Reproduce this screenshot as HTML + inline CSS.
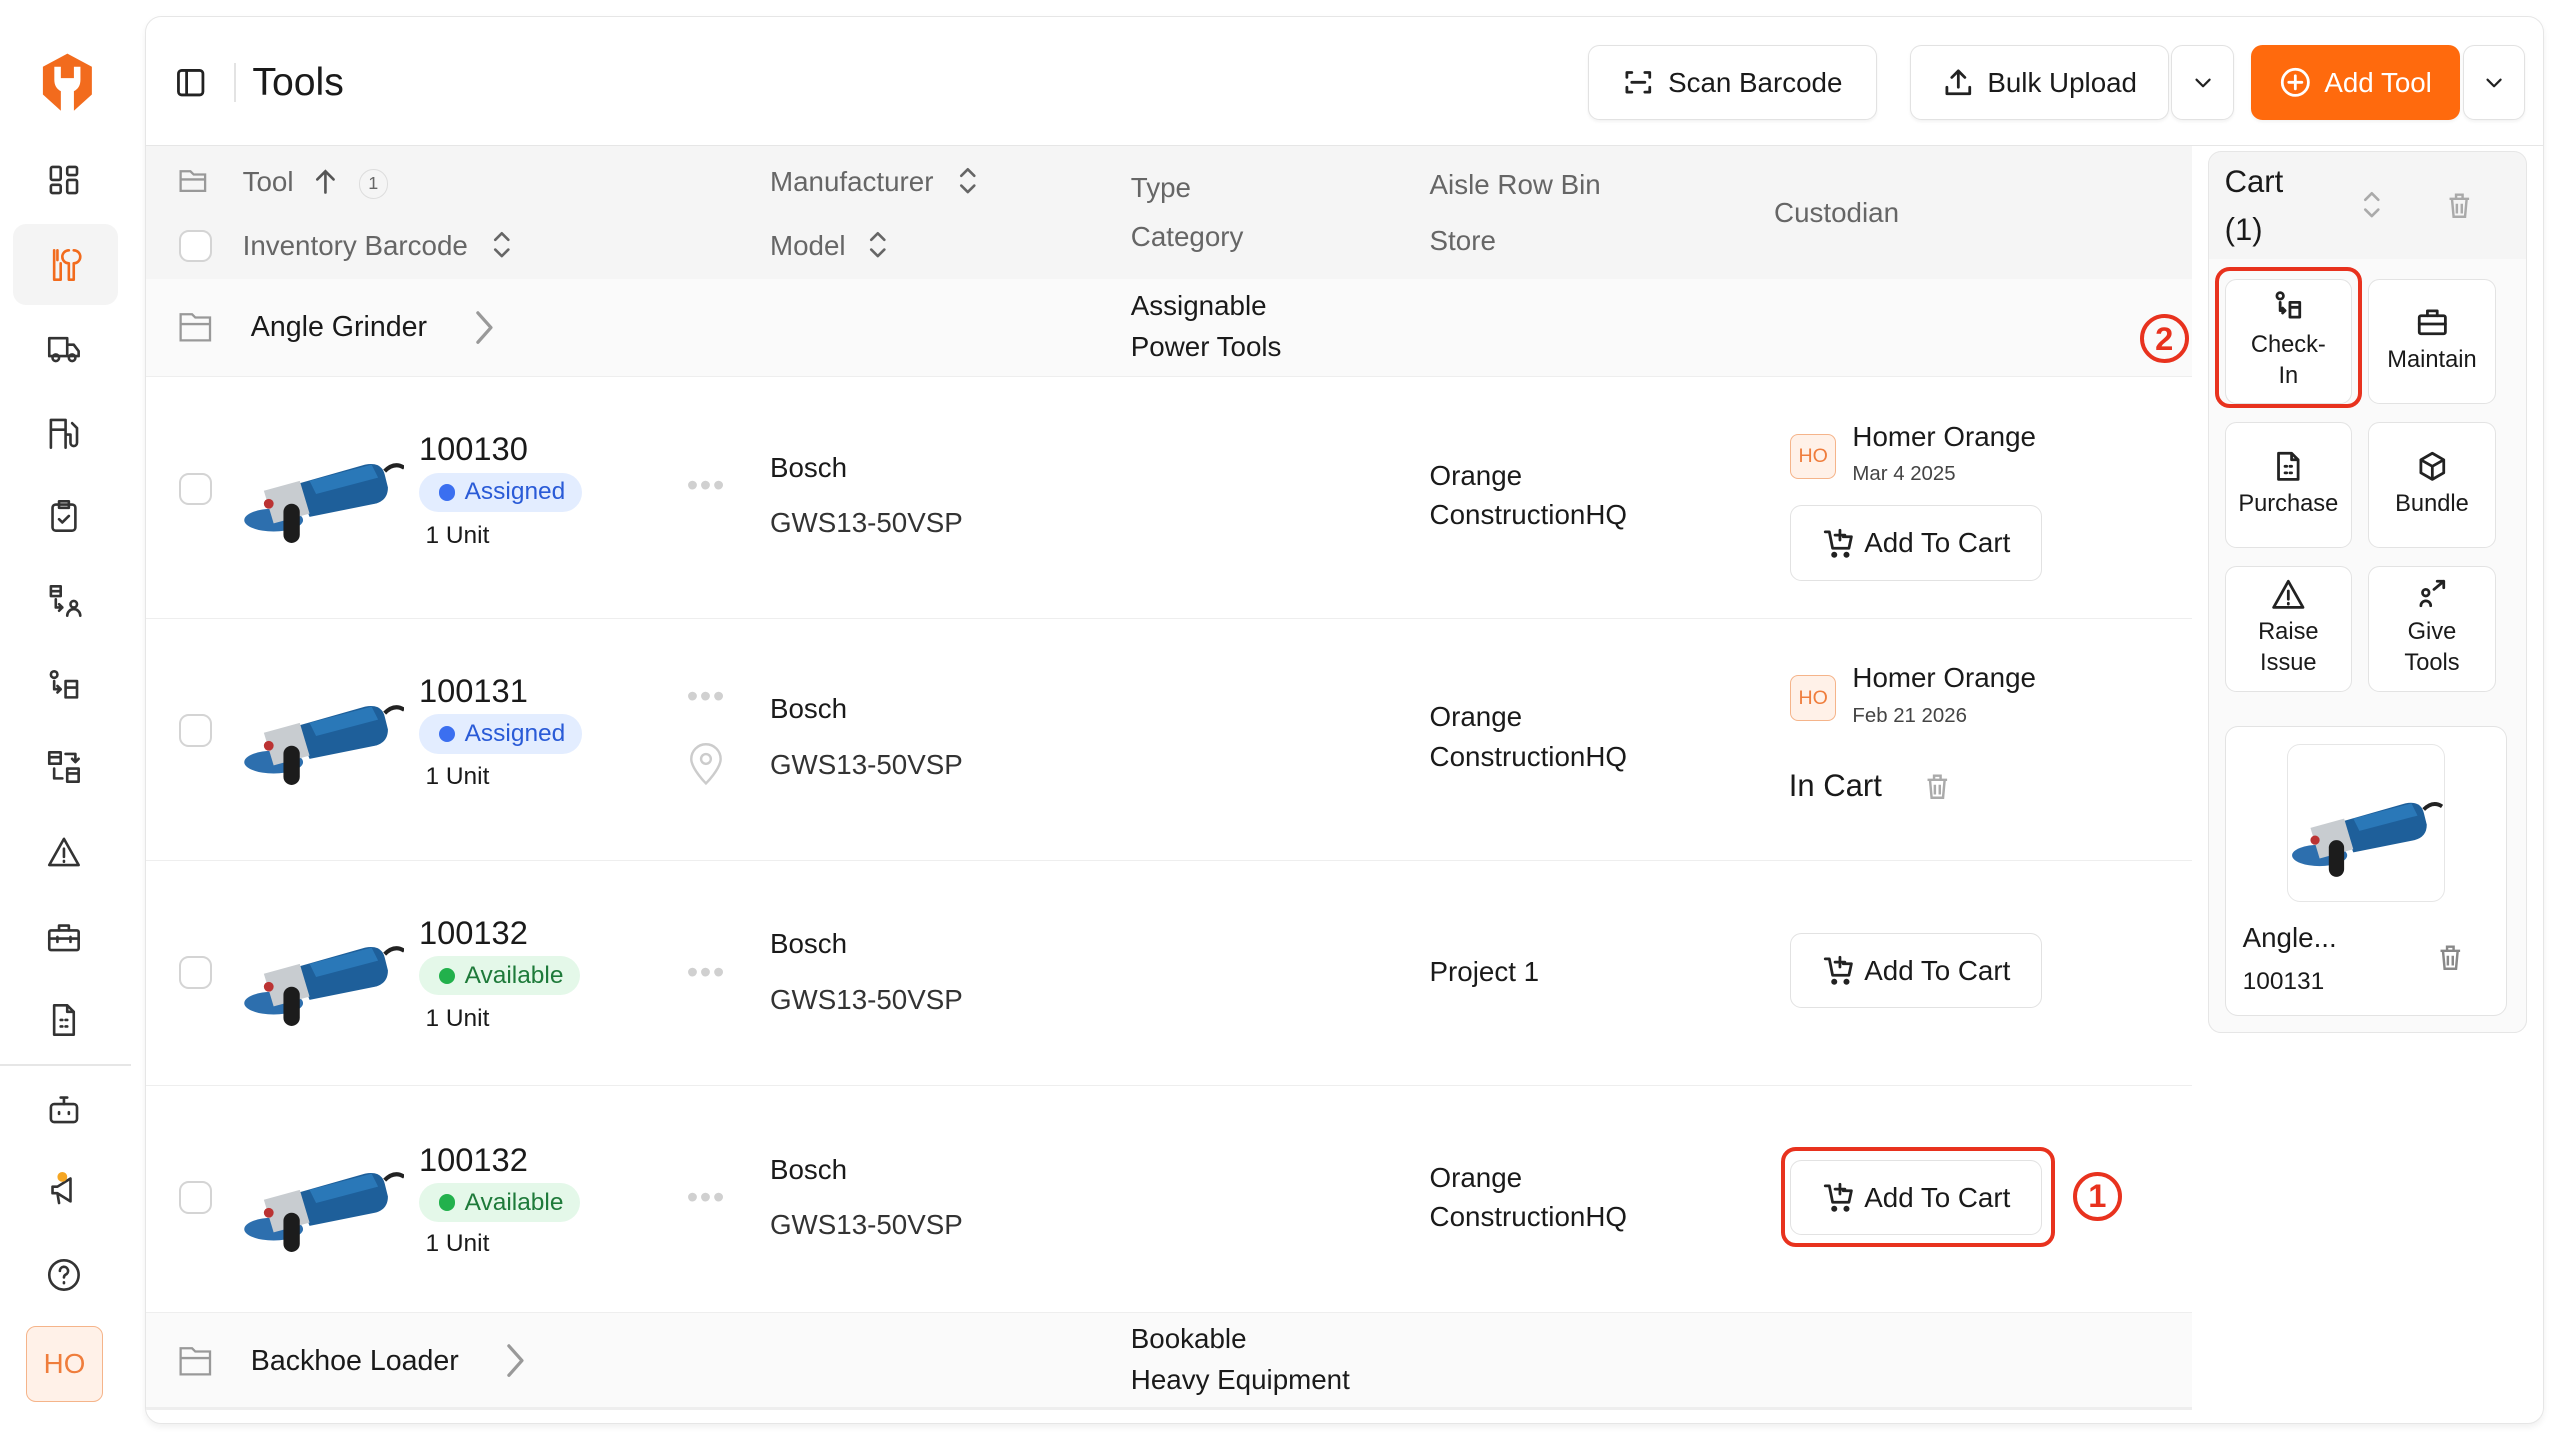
<!DOCTYPE html>
<html><head><meta charset="utf-8">
<style>
*{box-sizing:border-box;margin:0;padding:0}
html,body{width:2560px;height:1440px;overflow:hidden;background:#fff}
#w{width:1568px;height:882px;zoom:1.63265;position:relative;font-family:"Liberation Sans",sans-serif;color:#1a1a1a;background:#fff}
.abs{position:absolute}
.side svg{position:absolute;left:28px;width:22px;height:22px;fill:none;stroke:#333;stroke-width:1.6;stroke-linecap:round;stroke-linejoin:round}
.card{left:89px;top:10px;width:1469px;height:862px;border:1px solid #e6e6e6;border-radius:10px;background:#fff;box-shadow:0 2px 4px rgba(0,0,0,.06);overflow:hidden}
.btn{position:absolute;top:17px;height:46px;border:1px solid #e2e2e2;border-radius:7px;background:#fff;font-size:17px;display:flex;align-items:center;justify-content:center;gap:8px;box-shadow:0 1px 2px rgba(0,0,0,.05)}
.btn svg{width:20px;height:20px;fill:none;stroke:#222;stroke-width:1.7;stroke-linecap:round;stroke-linejoin:round}
.hd{color:#666;font-size:16.5px}
.t{position:absolute;font-size:17px;white-space:nowrap}
.cb{position:absolute;width:20px;height:20px;border:1.5px solid #d4d4d4;border-radius:6px;background:#fff}
.row{position:absolute;left:0;width:1253px;border-top:1px solid #eee;background:#fff}
.pill{position:absolute;height:24px;border-radius:12px;font-size:15px;display:flex;align-items:center;padding:0 10px 0 12px;gap:6px}
.pill i{width:10px;height:10px;border-radius:5px;display:block}
.atc{position:absolute;width:154px;height:46px;border:1px solid #e2e2e2;border-radius:7px;background:#fff;display:flex;align-items:center;justify-content:center;gap:6px;font-size:17px}
.atc svg{width:20px;height:20px;fill:none;stroke:#222;stroke-width:1.7;stroke-linecap:round;stroke-linejoin:round}
.ho{position:absolute;width:28px;height:28px;border:1px solid #f5b48a;background:#fff1e8;color:#ef7d3c;font-size:12px;border-radius:5px;display:flex;align-items:center;justify-content:center}
.tile{position:absolute;width:78px;height:77px;border:1px solid #e3e3e3;border-radius:7px;background:#fff;display:flex;flex-direction:column;align-items:center;justify-content:center;font-size:14.5px;text-align:center;line-height:19px}
.tile svg{width:20px;height:20px;fill:none;stroke:#222;stroke-width:1.7;stroke-linecap:round;stroke-linejoin:round;margin-bottom:4px}
.dots{position:absolute;color:#d0d0d0;font-size:20px;letter-spacing:1px}
.red{position:absolute;border:2.5px solid #e8321e;border-radius:9px}
.num{position:absolute;width:30px;height:30px;border:2.5px solid #e8321e;border-radius:50%;color:#e8321e;font-size:20px;font-weight:bold;display:flex;align-items:center;justify-content:center}
.srt{position:absolute;width:12px;height:18px;fill:none;stroke:#666;stroke-width:1.6;stroke-linecap:round;stroke-linejoin:round}
.chev{position:absolute;width:14px;height:24px;fill:none;stroke:#999;stroke-width:2;stroke-linecap:round;stroke-linejoin:round}
</style></head><body><div id="w">
<svg width="0" height="0" style="position:absolute"><defs>
<g id="gr">
<path d="M34 24 L76 12 Q86 10 88 18 L90 26 Q90 34 82 36 L42 44 Z" fill="#1e5f9a"/>
<path d="M42 22 L80 12 L84 20 L46 30Z" fill="#2a78b8"/>
<path d="M88 16 Q94 10 100 14" stroke="#222" stroke-width="2.5" fill="none"/>
<ellipse cx="20" cy="46" rx="18" ry="7" fill="#2d6fae"/>
<path d="M14 28 L36 22 L42 42 L20 48Z" fill="#c8ccd0"/>
<rect x="26" y="36" width="10" height="24" rx="5" fill="#1c1c1c"/>
<circle cx="17" cy="36" r="3" fill="#b33"/>
</g>
<g id="trash"><path d="M4 6h12M8 6V3.5h4V6M5.5 6l1 11h7l1-11M8.5 9v6M11.5 9v6"/></g>
<g id="cart"><path d="M2 3h2.5l2 10h10l1.5-7H13M11 2v6M8 5h6"/><circle cx="7.5" cy="17" r="1" fill="#222"/><circle cx="15" cy="17" r="1" fill="#222"/></g>
<g id="ud"><path d="M2 6l4-4 4 4M2 12l4 4 4-4"/></g>
</defs></svg>

<div class="side">
<svg style="top:32px;width:36px;height:38px;left:23px;stroke:none" viewBox="0 0 36 38"><path d="M18 1 L33 9 L33 26 L22 36 L22 24 Q26 22 26 17 L26 9 L22 9 L22 16 L14 16 L14 9 L10 9 L10 17 Q10 22 14 24 L14 36 L3 26 L3 9Z" fill="#f26b1d"/></svg>
<svg style="top:99px" viewBox="0 0 22 22"><rect x="3" y="3" width="6" height="8" rx="1"/><rect x="13" y="3" width="6" height="5" rx="1"/><rect x="3" y="14" width="6" height="5" rx="1"/><rect x="13" y="11" width="6" height="8" rx="1"/></svg>
<div class="abs" style="left:8px;top:137px;width:64px;height:50px;background:#f4f4f4;border-radius:8px"></div>
<svg style="top:151px;stroke:#f26b1d" viewBox="0 0 22 22"><path d="M5 2v18h4V10M7 2v6M14 2a4 4 0 0 0 0 8v10h3V10a4 4 0 0 0 0-8"/></svg>
<svg style="top:202px" viewBox="0 0 22 22"><path d="M2 5h11v11H2zM13 9h4l3 4v3h-7"/><circle cx="6" cy="17" r="2"/><circle cx="16" cy="17" r="2"/></svg>
<svg style="top:254px" viewBox="0 0 22 22"><path d="M3 20V3h9v17M3 9h9M12 12h3v5a2 2 0 0 0 4 0V8l-3-3"/></svg>
<svg style="top:305px" viewBox="0 0 22 22"><rect x="4" y="4" width="14" height="16" rx="2"/><path d="M8 2h6v4H8zM8 13l2 2 4-4"/></svg>
<svg style="top:357px" viewBox="0 0 22 22"><path d="M3 2h6v6H3zM3 5h6M6 10v5h4M8 13l2 2-2 2"/><circle cx="17" cy="13" r="2"/><path d="M13 20a4 4 0 0 1 8 0"/></svg>
<svg style="top:409px" viewBox="0 0 22 22"><circle cx="5" cy="4" r="2"/><path d="M5 8v5h4M7 11l2 2-2 2M12 8h7v10h-7zM12 12h7"/></svg>
<svg style="top:459px" viewBox="0 0 22 22"><path d="M2 2h7v7H2zM2 5h7M13 12h7v8h-7zM13 15h7M12 3h6v5M16 6l2 2 2-2M5 12v6h5"/></svg>
<svg style="top:511px" viewBox="0 0 22 22"><path d="M11 3L2 19h18zM11 9v5M11 16.5v.5"/></svg>
<svg style="top:563px" viewBox="0 0 22 22"><rect x="2" y="7" width="18" height="12" rx="1"/><path d="M8 7V4h6v3M2 12h18M7 11v3M15 11v3"/></svg>
<svg style="top:614px" viewBox="0 0 22 22"><path d="M5 2h8l4 4v14H5zM13 2v4h4M9 11h1M12 11h1M9 15h1M12 15h1"/></svg>
<div class="abs" style="left:0;top:652px;width:80px;height:1px;background:#e6e6e6"></div>
<svg style="top:668px" viewBox="0 0 22 22"><rect x="3" y="8" width="16" height="11" rx="2"/><path d="M11 8V4M9 4h4M8 13v1M14 13v1"/></svg>
<svg style="top:718px" viewBox="0 0 22 22"><path d="M4 9h3l8-5v14l-8-5H4zM7 13l1 6"/><circle cx="10" cy="3" r="3" fill="#f5a623" stroke="none"/></svg>
<svg style="top:770px" viewBox="0 0 22 22"><circle cx="11" cy="11" r="9"/><path d="M8.5 8.5a2.5 2.5 0 1 1 3.5 2.3c-.7.4-1 .9-1 1.7M11 15.5v.5"/></svg>
<div class="abs" style="left:16px;top:812px;width:47px;height:47px;border:1px solid #f5b48a;background:#fff1e8;border-radius:6px;color:#ef7d3c;font-size:17px;display:flex;align-items:center;justify-content:center">HO</div>
</div>

<div class="abs card">
<svg class="abs" style="left:18px;top:31px;width:18px;height:18px;fill:none;stroke:#222;stroke-width:1.7" viewBox="0 0 18 18"><rect x="1.5" y="1.5" width="15" height="15" rx="2"/><path d="M6.5 1.5v15"/></svg>
<div class="abs" style="left:54px;top:28px;width:1px;height:24px;background:#e3e3e3"></div>
<div class="abs" style="left:65px;top:27px;font-size:24px">Tools</div>
<div class="btn" style="left:883px;width:177px"><svg viewBox="0 0 20 20"><path d="M3 7V4h3M14 4h3v3M17 13v3h-3M6 16H3v-3M6 10h8"/></svg>Scan Barcode</div>
<div class="btn" style="left:1080px;width:159px"><svg viewBox="0 0 20 20"><path d="M10 13V3M6 7l4-4 4 4M3 13v4h14v-4"/></svg>Bulk Upload</div>
<div class="btn" style="left:1240px;width:39px"><svg viewBox="0 0 20 20" style="width:16px"><path d="M5 8l5 5 5-5"/></svg></div>
<div class="btn" style="left:1289px;width:128px;background:#ff6a0d;border-color:#ff6a0d;color:#fff"><svg viewBox="0 0 20 20" style="stroke:#fff"><circle cx="10" cy="10" r="8"/><path d="M10 6v8M6 10h8"/></svg>Add Tool</div>
<div class="btn" style="left:1419px;width:38px"><svg viewBox="0 0 20 20" style="width:16px"><path d="M5 8l5 5 5-5"/></svg></div>
<div class="abs" style="left:0;top:78px;width:1469px;height:1px;background:#e6e6e6"></div>

<div class="abs" style="left:0;top:79px;width:1253px;height:81px;background:#f5f5f5"></div>
<svg class="abs" style="left:20px;top:92px;width:18px;height:16px;fill:none;stroke:#999;stroke-width:1.4" viewBox="0 0 18 16"><path d="M1 2h6l2 2h7v10H1zM1 7h15"/></svg>
<div class="t hd" style="left:59px;top:91px">Tool</div>
<svg class="abs" style="left:103px;top:92px;width:14px;height:16px;fill:none;stroke:#555;stroke-width:1.6;stroke-linecap:round" viewBox="0 0 14 16"><path d="M7 15V2M2 7l5-5 5 5"/></svg>
<div class="abs" style="left:130px;top:93px;width:18px;height:18px;border:1px solid #ddd;border-radius:9px;font-size:11px;color:#666;display:flex;align-items:center;justify-content:center">1</div>
<div class="cb" style="left:20px;top:130px"></div>
<div class="t hd" style="left:59px;top:130px">Inventory Barcode</div>
<svg class="srt" style="left:212px;top:130px" viewBox="0 0 12 18"><use href="#ud"/></svg>
<div class="t hd" style="left:382px;top:91px">Manufacturer</div>
<svg class="srt" style="left:497px;top:91px" viewBox="0 0 12 18"><use href="#ud"/></svg>
<div class="t hd" style="left:382px;top:130px">Model</div>
<svg class="srt" style="left:442px;top:130px" viewBox="0 0 12 18"><use href="#ud"/></svg>
<div class="t hd" style="left:603px;top:95px">Type</div>
<div class="t hd" style="left:603px;top:125px">Category</div>
<div class="t hd" style="left:786px;top:93px">Aisle Row Bin</div>
<div class="t hd" style="left:786px;top:127px">Store</div>
<div class="t hd" style="left:997px;top:110px">Custodian</div>

<div class="abs" style="left:0;top:160px;width:1253px;height:60px;background:#fafafa"></div>
<svg class="abs" style="left:20px;top:180px;width:22px;height:19px;fill:none;stroke:#999;stroke-width:1.4" viewBox="0 0 22 19"><path d="M1 2h7l2 2h9v14H1zM1 8h18"/></svg>
<div class="t" style="left:64px;top:180px;font-size:17.5px">Angle Grinder</div>
<svg class="chev" style="left:200px;top:178px" viewBox="0 0 14 24"><path d="M3 3l8 9-8 9"/></svg>
<div class="t" style="left:603px;top:167px">Assignable</div>
<div class="t" style="left:603px;top:192px">Power Tools</div>

<div class="row" style="top:220px;height:148px"></div>
<div class="row" style="top:368px;height:148px"></div>
<div class="row" style="top:516px;height:138px"></div>
<div class="row" style="top:654px;height:139px"></div>

<div class="cb" style="left:20px;top:279px"></div>
<svg class="abs" style="left:58px;top:262px;width:100px;height:64px" viewBox="0 0 100 64"><use href="#gr"/></svg>
<div class="t" style="left:167px;top:253px;font-size:20px">100130</div>
<div class="pill" style="left:167px;top:279px;background:#e3edff;color:#2a5bd7"><i style="background:#3b6ff0"></i>Assigned</div>
<div class="t" style="left:171px;top:309px;font-size:15px">1 Unit</div>
<div class="dots" style="left:331px;top:275px">•••</div>
<div class="t" style="left:382px;top:266px">Bosch</div>
<div class="t" style="left:382px;top:300px;color:#333">GWS13-50VSP</div>
<div class="t" style="left:786px;top:271px">Orange</div>
<div class="t" style="left:786px;top:295px">ConstructionHQ</div>
<div class="ho" style="left:1007px;top:255px">HO</div>
<div class="t" style="left:1045px;top:247px">Homer Orange</div>
<div class="t" style="left:1045px;top:273px;font-size:12.5px;color:#444">Mar 4 2025</div>
<div class="atc" style="left:1007px;top:299px"><svg viewBox="0 0 20 20"><use href="#cart"/></svg>Add To Cart</div>

<div class="cb" style="left:20px;top:427px"></div>
<svg class="abs" style="left:58px;top:410px;width:100px;height:64px" viewBox="0 0 100 64"><use href="#gr"/></svg>
<div class="t" style="left:167px;top:401px;font-size:20px">100131</div>
<div class="pill" style="left:167px;top:427px;background:#e3edff;color:#2a5bd7"><i style="background:#3b6ff0"></i>Assigned</div>
<div class="t" style="left:171px;top:457px;font-size:15px">1 Unit</div>
<div class="dots" style="left:331px;top:404px">•••</div>
<svg class="abs" style="left:332px;top:443px;width:22px;height:28px;fill:none;stroke:#ccc;stroke-width:1.5" viewBox="0 0 22 28"><path d="M11 26s9-9 9-15a9 9 0 0 0-18 0c0 6 9 15 9 15z"/><circle cx="11" cy="11" r="3"/></svg>
<div class="t" style="left:382px;top:414px">Bosch</div>
<div class="t" style="left:382px;top:448px;color:#333">GWS13-50VSP</div>
<div class="t" style="left:786px;top:419px">Orange</div>
<div class="t" style="left:786px;top:443px">ConstructionHQ</div>
<div class="ho" style="left:1007px;top:403px">HO</div>
<div class="t" style="left:1045px;top:395px">Homer Orange</div>
<div class="t" style="left:1045px;top:421px;font-size:12.5px;color:#444">Feb 21 2026</div>
<div class="t" style="left:1006px;top:460px;font-size:19px">In Cart</div>
<svg class="abs" style="left:1087px;top:461px;width:20px;height:20px;fill:none;stroke:#aaa;stroke-width:1.5" viewBox="0 0 20 20"><use href="#trash"/></svg>

<div class="cb" style="left:20px;top:575px"></div>
<svg class="abs" style="left:58px;top:558px;width:100px;height:64px" viewBox="0 0 100 64"><use href="#gr"/></svg>
<div class="t" style="left:167px;top:549px;font-size:20px">100132</div>
<div class="pill" style="left:167px;top:575px;background:#e4f8e9;color:#1e7a3a"><i style="background:#22b14c"></i>Available</div>
<div class="t" style="left:171px;top:605px;font-size:15px">1 Unit</div>
<div class="dots" style="left:331px;top:573px">•••</div>
<div class="t" style="left:382px;top:558px">Bosch</div>
<div class="t" style="left:382px;top:592px;color:#333">GWS13-50VSP</div>
<div class="t" style="left:786px;top:575px">Project 1</div>
<div class="atc" style="left:1007px;top:561px"><svg viewBox="0 0 20 20"><use href="#cart"/></svg>Add To Cart</div>

<div class="cb" style="left:20px;top:713px"></div>
<svg class="abs" style="left:58px;top:696px;width:100px;height:64px" viewBox="0 0 100 64"><use href="#gr"/></svg>
<div class="t" style="left:167px;top:688px;font-size:20px">100132</div>
<div class="pill" style="left:167px;top:714px;background:#e4f8e9;color:#1e7a3a"><i style="background:#22b14c"></i>Available</div>
<div class="t" style="left:171px;top:743px;font-size:15px">1 Unit</div>
<div class="dots" style="left:331px;top:711px">•••</div>
<div class="t" style="left:382px;top:696px">Bosch</div>
<div class="t" style="left:382px;top:730px;color:#333">GWS13-50VSP</div>
<div class="t" style="left:786px;top:701px">Orange</div>
<div class="t" style="left:786px;top:725px">ConstructionHQ</div>
<div class="atc" style="left:1007px;top:700px"><svg viewBox="0 0 20 20"><use href="#cart"/></svg>Add To Cart</div>
<div class="red" style="left:1001px;top:692px;width:168px;height:61px"></div>
<div class="num" style="left:1180px;top:707px">1</div>

<div class="abs" style="left:0;top:793px;width:1253px;height:60px;background:#fafafa;border-top:1px solid #eee;border-bottom:2px solid #eee"></div>
<svg class="abs" style="left:20px;top:813px;width:22px;height:19px;fill:none;stroke:#999;stroke-width:1.4" viewBox="0 0 22 19"><path d="M1 2h7l2 2h9v14H1zM1 8h18"/></svg>
<div class="t" style="left:64px;top:813px;font-size:17.5px">Backhoe Loader</div>
<svg class="chev" style="left:219px;top:811px" viewBox="0 0 14 24"><path d="M3 3l8 9-8 9"/></svg>
<div class="t" style="left:603px;top:800px">Bookable</div>
<div class="t" style="left:603px;top:825px">Heavy Equipment</div>

<div class="num" style="left:1221px;top:182px">2</div>

<div class="abs" style="left:1263px;top:82px;width:195px;height:540px;background:#f5f5f5;border:1px solid #e6e6e6;border-radius:8px"></div>
<div class="abs" style="left:1263px;top:148px;width:195px;height:474px;background:#fafafa;border-radius:0 0 8px 8px;border:1px solid #e6e6e6;border-top:none"></div>
<div class="t" style="left:1273px;top:90px;font-size:19px">Cart</div>
<div class="t" style="left:1273px;top:119px;font-size:19px">(1)</div>
<svg class="srt" style="left:1357px;top:106px;stroke:#aaa" viewBox="0 0 12 18"><use href="#ud"/></svg>
<svg class="abs" style="left:1407px;top:105px;width:20px;height:20px;fill:none;stroke:#aaa;stroke-width:1.5" viewBox="0 0 20 20"><use href="#trash"/></svg>

<div class="tile" style="left:1273px;top:160px"><svg viewBox="0 0 20 20"><circle cx="5" cy="3" r="2"/><path d="M5 7v5h3M6.5 10.5 8 12l-1.5 1.5M11 7h6v9h-6zM11 10h6"/></svg>Check-<br>In</div>
<div class="red" style="left:1267px;top:153px;width:90px;height:86px"></div>
<div class="tile" style="left:1361px;top:160px"><svg viewBox="0 0 20 20"><rect x="2" y="6" width="16" height="11" rx="1"/><path d="M7 6V3h6v3M2 11h16"/></svg>Maintain</div>
<div class="tile" style="left:1273px;top:248px"><svg viewBox="0 0 20 20"><path d="M4 2h8l4 4v12H4zM12 2v4h4M8 10h1M11 10h1M8 14h1M11 14h1"/></svg>Purchase</div>
<div class="tile" style="left:1361px;top:248px"><svg viewBox="0 0 20 20"><path d="M10 2l7 4v8l-7 4-7-4V6zM3 6l7 4 7-4M10 10v8"/></svg>Bundle</div>
<div class="tile" style="left:1273px;top:336px"><svg viewBox="0 0 20 20"><path d="M10 2L1 18h18zM10 8v5M10 15.5v.5"/></svg>Raise<br>Issue</div>
<div class="tile" style="left:1361px;top:336px"><svg viewBox="0 0 20 20"><circle cx="6" cy="9" r="2"/><path d="M3 17a3 3 0 0 1 6 0M11 7l6-5M13 2h4v4"/></svg>Give<br>Tools</div>

<div class="abs" style="left:1273px;top:434px;width:173px;height:178px;background:#fff;border:1px solid #e3e3e3;border-radius:8px"></div>
<div class="abs" style="left:1311px;top:445px;width:97px;height:97px;background:#fff;border:1px solid #e6e6e6;border-radius:8px"></div>
<svg class="abs" style="left:1312px;top:470px;width:95px;height:60px" viewBox="0 0 100 64"><use href="#gr"/></svg>
<div class="t" style="left:1284px;top:554px;font-size:17px">Angle...</div>
<div class="t" style="left:1284px;top:582px;font-size:15px">100131</div>
<svg class="abs" style="left:1401px;top:566px;width:20px;height:20px;fill:none;stroke:#888;stroke-width:1.5" viewBox="0 0 20 20"><use href="#trash"/></svg>
</div>
</div></body></html>
